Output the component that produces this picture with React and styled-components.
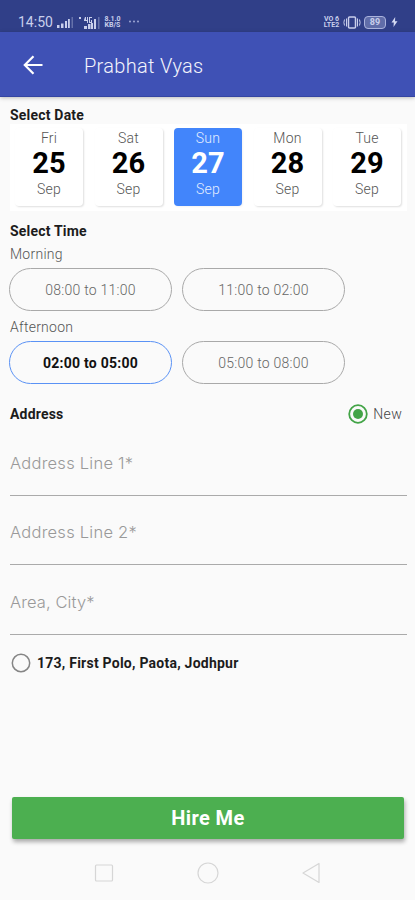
import { useState } from "react";
import styled, { createGlobalStyle } from "styled-components";

const GlobalStyle = createGlobalStyle`
  * {
    box-sizing: border-box;
  }
  body {
    margin: 0;
    background: #fafafa;
    font-family: Roboto, "Liberation Sans", sans-serif;
  }
  button {
    font-family: inherit;
    padding: 0;
    cursor: pointer;
  }
`;

const Screen = styled.div`
  width: 415px;
  height: 900px;
  display: flex;
  flex-direction: column;
  background: #fafafa;
  overflow: hidden;
`;
const StatusBar = styled.div`
  height: 32px;
  flex: none;
  display: flex;
  align-items: flex-end;
  justify-content: space-between;
  padding: 0 16px 1px 18px;
  background: #303f88;
  color: #c9cfec;
`;
const StatusGroup = styled.div`
  display: flex;
  align-items: center;
  height: 18px;
  gap: ${(props) => props.$gap}px;
`;
const Clock = styled.span`
  width: 35px;
  font-size: 14px;
  line-height: 18px;
  white-space: nowrap;
`;
const TinyStack = styled.span`
  display: flex;
  flex-direction: column;
  align-items: center;
  font-size: 7px;
  font-weight: 700;
  line-height: 6.5px;
  width: 17px;
`;
const Battery = styled.span`
  width: 22px;
  height: 13px;
  border: 1px solid #aab3dd;
  border-radius: 4px;
  background: #606da9;
  font-size: 9px;
  font-weight: 700;
  line-height: 11px;
  text-align: center;
`;
const AppBar = styled.header`
  height: 65px;
  flex: none;
  display: flex;
  align-items: center;
  padding: 2px 0 0 22px;
  background: #3f51b5;
  border-bottom: 1px solid #3445a2;
  box-shadow: 0 1px 4px rgba(0, 0, 0, 0.25);
`;
const BackButton = styled.button`
  display: flex;
  border: none;
  background: none;
`;
const Title = styled.h1`
  margin: 2px 0 0 40px;
  font-size: 20px;
  font-weight: 300;
  letter-spacing: 0.3px;
  color: #f3f4fc;
`;
const Content = styled.main`
  flex: 1;
  display: flex;
  flex-direction: column;
  padding: 10px 9px 0 10px;
`;
const Heading = styled.h2`
  margin: 0;
  font-size: 14px;
  font-weight: 700;
  line-height: 17px;
  letter-spacing: 0.2px;
  color: #1c1c1c;
`;
const DateStrip = styled.div`
  display: flex;
  justify-content: space-between;
  height: 87px;
  width: 397px;
  padding: 4px 6px 5px 5px;
  background: #fff;
`;
const DateCard = styled.button`
  width: 68px;
  height: 78px;
  display: flex;
  flex-direction: column;
  align-items: center;
  border: none;
  border-radius: 4px;
  background: ${(props) => (props.$active ? "#4285fb" : "#fff")};
  color: ${(props) => (props.$active ? "#fff" : "#000")};
  box-shadow: 1px 1px 2px rgba(0, 0, 0, ${(props) => (props.$active ? 0.05 : 0.13)});
`;
const DateWord = styled.span`
  font-size: 14px;
  font-weight: 300;
  line-height: 20px;
  letter-spacing: 0.2px;
  color: ${(props) => (props.$active ? "#e4eeff" : "#555")};
`;
const DateNumber = styled.span`
  font-size: 29px;
  font-weight: 700;
  line-height: 31px;
`;
const TimeSection = styled.section`
  margin-top: 12px;
`;
const PartOfDay = styled.div`
  padding-top: ${(props) => props.$top}px;
  font-size: 14px;
  font-weight: 300;
  line-height: 18px;
  letter-spacing: 0.25px;
  color: #555;
`;
const SlotRow = styled.div`
  display: flex;
  gap: 10px;
  margin: 5px 0 0 -1px;
`;
const Slot = styled.button`
  width: 163px;
  height: 43px;
  padding-top: 1px;
  border: 1px solid ${(props) => (props.$active ? "#5a92f5" : "#a9a9a9")};
  border-radius: 22px;
  background: transparent;
  font-size: 14px;
  font-weight: ${(props) => (props.$active ? 700 : 300)};
  letter-spacing: 0.25px;
  color: ${(props) => (props.$active ? "#111" : "#666")};
`;
const AddressHeader = styled.div`
  display: flex;
  align-items: center;
  justify-content: space-between;
  height: 24px;
  margin-top: 18px;
  padding-right: 4px;
`;
const Option = styled.label`
  display: flex;
  align-items: center;
  gap: 5px;
  font-size: 14px;
  font-weight: 300;
  letter-spacing: 0.3px;
  color: #444;
`;
const Field = styled.div`
  width: 397px;
  height: ${(props) => props.$height}px;
  display: flex;
  align-items: flex-end;
  padding-bottom: 21px;
  border-bottom: 1px solid #aaa;
  font-family: Inter, Roboto, sans-serif;
  font-size: 16.5px;
  font-weight: 300;
  line-height: 22px;
  letter-spacing: ${(props) => props.$spacing}px;
  color: #999;
`;
const SavedAddress = styled.label`
  display: flex;
  align-items: center;
  gap: 6px;
  height: 22px;
  margin: 17px 0 0 1px;
  font-size: 14px;
  font-weight: 700;
  letter-spacing: 0.24px;
  color: #1c1c1c;
`;
const HireButton = styled.button`
  width: 392px;
  height: 42px;
  margin: auto 0 0 12px;
  flex: none;
  border: none;
  border-radius: 2px;
  background: #4caf50;
  color: #fff;
  font-size: 20px;
  font-weight: 700;
  letter-spacing: 0.4px;
  box-shadow: 1px 3px 4px rgba(0, 0, 0, 0.32);
`;
const NavBar = styled.nav`
  height: 61px;
  flex: none;
  display: flex;
  align-items: center;
  justify-content: center;
  gap: 80px;
  padding-top: 7px;
`;

const dates = [
  { day: "Fri", date: 25 },
  { day: "Sat", date: 26 },
  { day: "Sun", date: 27 },
  { day: "Mon", date: 28 },
  { day: "Tue", date: 29 },
];
const morning = ["08:00 to 11:00", "11:00 to 02:00"];
const afternoon = ["02:00 to 05:00", "05:00 to 08:00"];

const Signal = () => (
  <svg width="17" height="12" viewBox="0 0 17 12" fill="#c9cfec">
    <rect x="0" y="9" width="2.5" height="3" />
    <rect x="4" y="7.5" width="2.5" height="4.5" />
    <rect x="8" y="5" width="2" height="7" />
    <rect x="11" y="3" width="1.8" height="9" />
    <rect x="14.5" y="1" width="1.5" height="11" opacity="0.35" />
  </svg>
);

const RoamSignal = () => (
  <svg width="22" height="13" viewBox="0 0 22 13" fill="#c9cfec">
    <rect x="1" y="1" width="2" height="2" />
    <rect x="6" y="10" width="3" height="3" />
    <path d="M7 1h1v3h1V1h1v6H9V5H6V4zM11 1h3v1h-2v4h1V4h1v3h-3z" />
    <rect x="10" y="8" width="2.5" height="5" />
    <rect x="13" y="7" width="2" height="6" />
    <rect x="16" y="3" width="2" height="10" />
    <rect x="20" y="1" width="1.5" height="12" opacity="0.35" />
  </svg>
);

const Vibrate = () => (
  <svg width="18" height="13" viewBox="0 0 18 13" fill="none" stroke="#c9cfec">
    <rect x="5.5" y="1" width="7" height="11" rx="1" strokeWidth="1.5" />
    <path d="M3.5 2.5v8M1.5 3.5Q.3 6.5 1.5 9.5M14.5 2.5v8M16.5 3.5Q17.7 6.5 16.5 9.5" />
  </svg>
);

const Radio = ({ checked }) => (
  <svg width="20" height="20" viewBox="0 0 20 20" fill="none">
    <circle
      cx="10"
      cy="10"
      r={checked ? 8.8 : 8.7}
      stroke={checked ? "#43a447" : "#858585"}
      strokeWidth={checked ? 1.8 : 1.5}
    />
    {checked && <circle cx="10" cy="10" r="5" fill="#43a447" />}
  </svg>
);

const App = () => {
  const [selectedDate, setSelectedDate] = useState(27);
  const [selectedTime, setSelectedTime] = useState("02:00 to 05:00");

  const renderSlots = (slots) => (
    <SlotRow>
      {slots.map((slot) => (
        <Slot
          key={slot}
          $active={slot === selectedTime}
          onClick={() => setSelectedTime(slot)}
        >
          {slot}
        </Slot>
      ))}
    </SlotRow>
  );

  return (
    <Screen>
      <GlobalStyle />
      <StatusBar>
        <StatusGroup $gap={4}>
          <Clock>14:50</Clock>
          <Signal />
          <RoamSignal />
          <TinyStack>
            <span>8.1.0</span>
            <span>KB/S</span>
          </TinyStack>
          <svg width="14" height="4" viewBox="0 0 14 4" fill="#aab3dd">
            <circle cx="5" cy="1.5" r="0.9" />
            <circle cx="9" cy="1.5" r="0.9" />
            <circle cx="13" cy="1.5" r="0.9" />
          </svg>
        </StatusGroup>
        <StatusGroup $gap={3}>
          <TinyStack>
            <span>VO 6</span>
            <span>LTE2</span>
          </TinyStack>
          <Vibrate />
          <Battery>89</Battery>
          <svg width="10" height="10" viewBox="0 0 10 10" fill="#d5daf2">
            <rect x="-3" y="3.5" width="1.5" height="3" />
            <path d="M6.2 0L2.5 5.5h2.3L4.5 10l4-5.7H6z" />
          </svg>
        </StatusGroup>
      </StatusBar>

      <AppBar>
        <BackButton aria-label="Back">
          <svg width="22" height="22" viewBox="0 0 22 22" fill="none" stroke="#fff" strokeWidth="2.2">
            <path d="M20.5 11H3M11.5 2.3L2.8 11l8.7 8.7" />
          </svg>
        </BackButton>
        <Title>Prabhat Vyas</Title>
      </AppBar>

      <Content>
        <Heading>Select Date</Heading>
        <DateStrip>
          {dates.map(({ day, date }) => {
            const active = date === selectedDate;
            return (
              <DateCard key={date} $active={active} onClick={() => setSelectedDate(date)}>
                <DateWord $active={active}>{day}</DateWord>
                <DateNumber>{date}</DateNumber>
                <DateWord $active={active}>Sep</DateWord>
              </DateCard>
            );
          })}
        </DateStrip>

        <TimeSection>
          <Heading>Select Time</Heading>
          <PartOfDay $top={5}>Morning</PartOfDay>
          {renderSlots(morning)}
          <PartOfDay $top={7}>Afternoon</PartOfDay>
          {renderSlots(afternoon)}
        </TimeSection>

        <AddressHeader>
          <Heading>Address</Heading>
          <Option>
            <Radio checked />
            New
          </Option>
        </AddressHeader>
        <Field $height={70} $spacing={0.25}>Address Line 1*</Field>
        <Field $height={69} $spacing={0.25}>Address Line 2*</Field>
        <Field $height={70} $spacing={0.1}>Area, City*</Field>
        <SavedAddress>
          <Radio />
          173, First Polo, Paota, Jodhpur
        </SavedAddress>
      </Content>

      <HireButton>Hire Me</HireButton>
      <NavBar>
        <svg width="24" height="24" viewBox="0 0 24 24" fill="none" stroke="#d6d6d6" strokeWidth="1.2">
          <rect x="3.5" y="4" width="17" height="16" rx="1" />
        </svg>
        <svg width="24" height="24" viewBox="0 0 24 24" fill="none" stroke="#d6d6d6" strokeWidth="1.2">
          <circle cx="12" cy="12" r="10" />
        </svg>
        <svg width="24" height="24" viewBox="0 0 24 24" fill="none" stroke="#d6d6d6" strokeWidth="1.2" strokeLinejoin="round">
          <path d="M19 2.5v19L3 12z" />
        </svg>
      </NavBar>
    </Screen>
  );
};

export default App;
